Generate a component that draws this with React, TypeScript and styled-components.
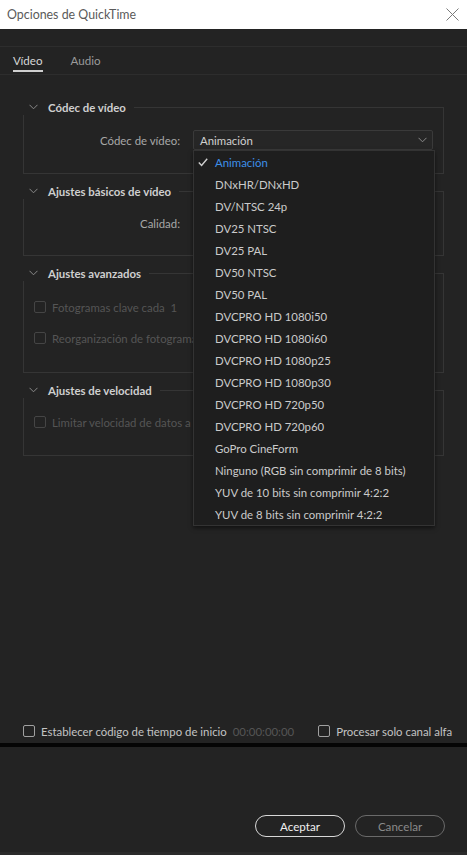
import React from 'react';
import styled, { createGlobalStyle } from 'styled-components';

const GlobalStyle = createGlobalStyle`
  html, body {
    margin: 0;
    padding: 0;
    background: #232323;
  }
  * {
    box-sizing: border-box;
  }
`

const Window = styled.div`
  position: relative;
  width: 467px;
  height: 855px;
  display: flex;
  flex-direction: column;
  background: #232323;
  font-family: Lato, "Open Sans", sans-serif;
  font-size: 11.4px;
  color: #c9c9c9;
  overflow: hidden;
`

const TitleBar = styled.div`
  height: 29px;
  flex-shrink: 0;
  background: #ffffff;
  display: flex;
  align-items: center;
  justify-content: space-between;
  padding: 0 8px 0 7px;
`

const Title = styled.span`
  font-size: 12.4px;
  color: #5a5a5a;
`

const TabBar = styled.div`
  margin-top: 17px;
  height: 29px;
  flex-shrink: 0;
  border-top: 1px solid #2d2d2d;
  border-bottom: 1px solid #2d2d2d;
  display: flex;
  align-items: flex-end;
  gap: 28px;
  padding-left: 13px;
`

const Tab = styled.div<{ $active?: boolean }>`
  font-size: 11.6px;
  color: ${p => (p.$active ? '#d6d6d6' : '#9a9a9a')};
  padding-bottom: 3px;
  border-bottom: 2px solid ${p => (p.$active ? '#cfcfcf' : 'transparent')};
  margin-bottom: 2px;
`

const Content = styled.div`
  flex: 1;
  padding: 24px 23px 0 23px;
  display: flex;
  flex-direction: column;
  gap: 9px;
`

const Section = styled.div`
  display: flex;
  flex-direction: column;
`

const SectionHeader = styled.div`
  height: 16px;
  display: flex;
  align-items: center;
  padding-left: 6px;
`

const SectionTitle = styled.span`
  font-weight: 700;
  color: #cfcfcf;
  margin-left: 10px;
  margin-right: 8px;
`

const HeaderLine = styled.div`
  flex: 1;
  align-self: flex-end;
  height: 8px;
  border-top: 1px solid #353535;
  border-right: 1px solid #353535;
`

const SectionBody = styled.div<{ $pt: number; $pb: number }>`
  border: 1px solid #353535;
  border-top: none;
  padding: ${p => p.$pt}px 10px ${p => p.$pb}px 10px;
  display: flex;
  flex-direction: column;
  gap: 15px;
`

const FieldRow = styled.div`
  height: 20px;
  display: flex;
  align-items: center;
  margin-left: -10px;
`

const FieldLabel = styled.span`
  width: 156px;
  text-align: right;
  color: #a8a8a8;
  margin-right: 13px;
`

const SelectBox = styled.div`
  width: 240px;
  height: 20px;
  border: 1px solid #3a3a3a;
  border-radius: 2px;
  background: #262626;
  display: flex;
  align-items: center;
  justify-content: space-between;
  padding: 0 5px 0 6px;
  color: #d0d0d0;
`

const CheckRow = styled.div<{ $disabled?: boolean }>`
  height: 16px;
  display: flex;
  align-items: center;
  gap: 6px;
  white-space: nowrap;
  color: ${p => (p.$disabled ? '#555555' : '#c4c4c4')};
`

const Checkbox = styled.span<{ $disabled?: boolean }>`
  width: 12px;
  height: 12px;
  border: 1px solid ${p => (p.$disabled ? '#454545' : '#a0a0a0')};
  border-radius: 2px;
  flex-shrink: 0;
`

const Muted = styled.span`
  color: #555555;
`

const FooterOptions = styled.div`
  height: 20px;
  flex-shrink: 0;
  display: flex;
  align-items: center;
  padding: 0 20px 0 23px;
  margin-bottom: 2px;
  gap: 24px;
`

const BlackBar = styled.div`
  height: 4px;
  flex-shrink: 0;
  background: #050505;
`

const ButtonArea = styled.div`
  height: 108px;
  flex-shrink: 0;
  display: flex;
  justify-content: flex-end;
  align-items: flex-end;
  gap: 10px;
  padding: 0 22px 15px 0;
  border-bottom: 3px solid #2a2a2a;
`

const PillButton = styled.button<{ $primary?: boolean }>`
  width: 90px;
  height: 22px;
  border-radius: 11px;
  background: transparent;
  border: 1px solid ${p => (p.$primary ? '#d8d8d8' : '#6a6a6a')};
  color: ${p => (p.$primary ? '#f0f0f0' : '#8a8a8a')};
  font-family: Lato, "Open Sans", sans-serif;
  font-size: 11.6px;
  padding: 0;
`

const DropdownMenu = styled.ul`
  position: absolute;
  left: 193px;
  top: 150px;
  width: 242px;
  margin: 0;
  padding: 0;
  list-style: none;
  background: #1e1e1e;
  border: 1px solid #333333;
  box-shadow: 0 2px 4px rgba(0, 0, 0, 0.5);
`

const MenuItem = styled.li<{ $selected?: boolean }>`
  height: 22px;
  display: flex;
  align-items: center;
  padding-left: 21px;
  position: relative;
  color: ${p => (p.$selected ? '#3d8fe8' : '#cbcbcb')};
  white-space: nowrap;
`

const CheckMark = styled.svg`
  position: absolute;
  left: 4px;
  top: 7px;
`

const Chevron = () => (
  <svg width="9" height="6" viewBox="0 0 9 6">
    <polyline points="0.5,0.8 4.5,4.8 8.5,0.8" fill="none" stroke="#8a8a8a" strokeWidth="1" />
  </svg>
)

const codecs = [
  'Animación',
  'DNxHR/DNxHD',
  'DV/NTSC 24p',
  'DV25 NTSC',
  'DV25 PAL',
  'DV50 NTSC',
  'DV50 PAL',
  'DVCPRO HD 1080i50',
  'DVCPRO HD 1080i60',
  'DVCPRO HD 1080p25',
  'DVCPRO HD 1080p30',
  'DVCPRO HD 720p50',
  'DVCPRO HD 720p60',
  'GoPro CineForm',
  'Ninguno (RGB sin comprimir de 8 bits)',
  'YUV de 10 bits sin comprimir 4:2:2',
  'YUV de 8 bits sin comprimir 4:2:2',
]

const App: React.FC = () => {
  return (
    <Window>
      <GlobalStyle />
      <TitleBar>
        <Title>Opciones de QuickTime</Title>
        <svg width="13" height="13" viewBox="0 0 13 13">
          <path d="M0.5 0.5 L12.5 12.5 M12.5 0.5 L0.5 12.5" stroke="#7a7a7a" strokeWidth="1" />
        </svg>
      </TitleBar>

      <TabBar>
        <Tab $active>Vídeo</Tab>
        <Tab>Audio</Tab>
      </TabBar>

      <Content>
        <Section>
          <SectionHeader>
            <Chevron />
            <SectionTitle>Códec de vídeo</SectionTitle>
            <HeaderLine />
          </SectionHeader>
          <SectionBody $pt={15} $pb={23}>
            <FieldRow>
              <FieldLabel>Códec de vídeo:</FieldLabel>
              <SelectBox>
                <span>Animación</span>
                <Chevron />
              </SelectBox>
            </FieldRow>
          </SectionBody>
        </Section>

        <Section>
          <SectionHeader>
            <Chevron />
            <SectionTitle>Ajustes básicos de vídeo</SectionTitle>
            <HeaderLine />
          </SectionHeader>
          <SectionBody $pt={14} $pb={22}>
            <FieldRow>
              <FieldLabel>Calidad:</FieldLabel>
            </FieldRow>
          </SectionBody>
        </Section>

        <Section>
          <SectionHeader>
            <Chevron />
            <SectionTitle>Ajustes avanzados</SectionTitle>
            <HeaderLine />
          </SectionHeader>
          <SectionBody $pt={18} $pb={26}>
            <CheckRow $disabled>
              <Checkbox $disabled />
              <span>Fotogramas clave cada&nbsp; 1</span>
            </CheckRow>
            <CheckRow $disabled>
              <Checkbox $disabled />
              <span>Reorganización de fotogramas</span>
            </CheckRow>
          </SectionBody>
        </Section>

        <Section>
          <SectionHeader>
            <Chevron />
            <SectionTitle>Ajustes de velocidad</SectionTitle>
            <HeaderLine />
          </SectionHeader>
          <SectionBody $pt={16} $pb={25}>
            <CheckRow $disabled>
              <Checkbox $disabled />
              <span>Limitar velocidad de datos a</span>
            </CheckRow>
          </SectionBody>
        </Section>
      </Content>

      <FooterOptions>
        <CheckRow>
          <Checkbox />
          <span>Establecer código de tiempo de inicio</span>
          <Muted>00:00:00:00</Muted>
        </CheckRow>
        <CheckRow>
          <Checkbox />
          <span>Procesar solo canal alfa</span>
        </CheckRow>
      </FooterOptions>
      <BlackBar />
      <ButtonArea>
        <PillButton $primary>Aceptar</PillButton>
        <PillButton>Cancelar</PillButton>
      </ButtonArea>

      <DropdownMenu>
        {codecs.map((c, i) => (
          <MenuItem key={c} $selected={i === 0}>
            {i === 0 && (
              <CheckMark width="10" height="9" viewBox="0 0 10 9">
                <polyline points="0.8,4.5 3.6,7.5 9.2,0.8" fill="none" stroke="#cfcfcf" strokeWidth="1.4" />
              </CheckMark>
            )}
            {c}
          </MenuItem>
        ))}
      </DropdownMenu>
    </Window>
  );
}

export default App;
